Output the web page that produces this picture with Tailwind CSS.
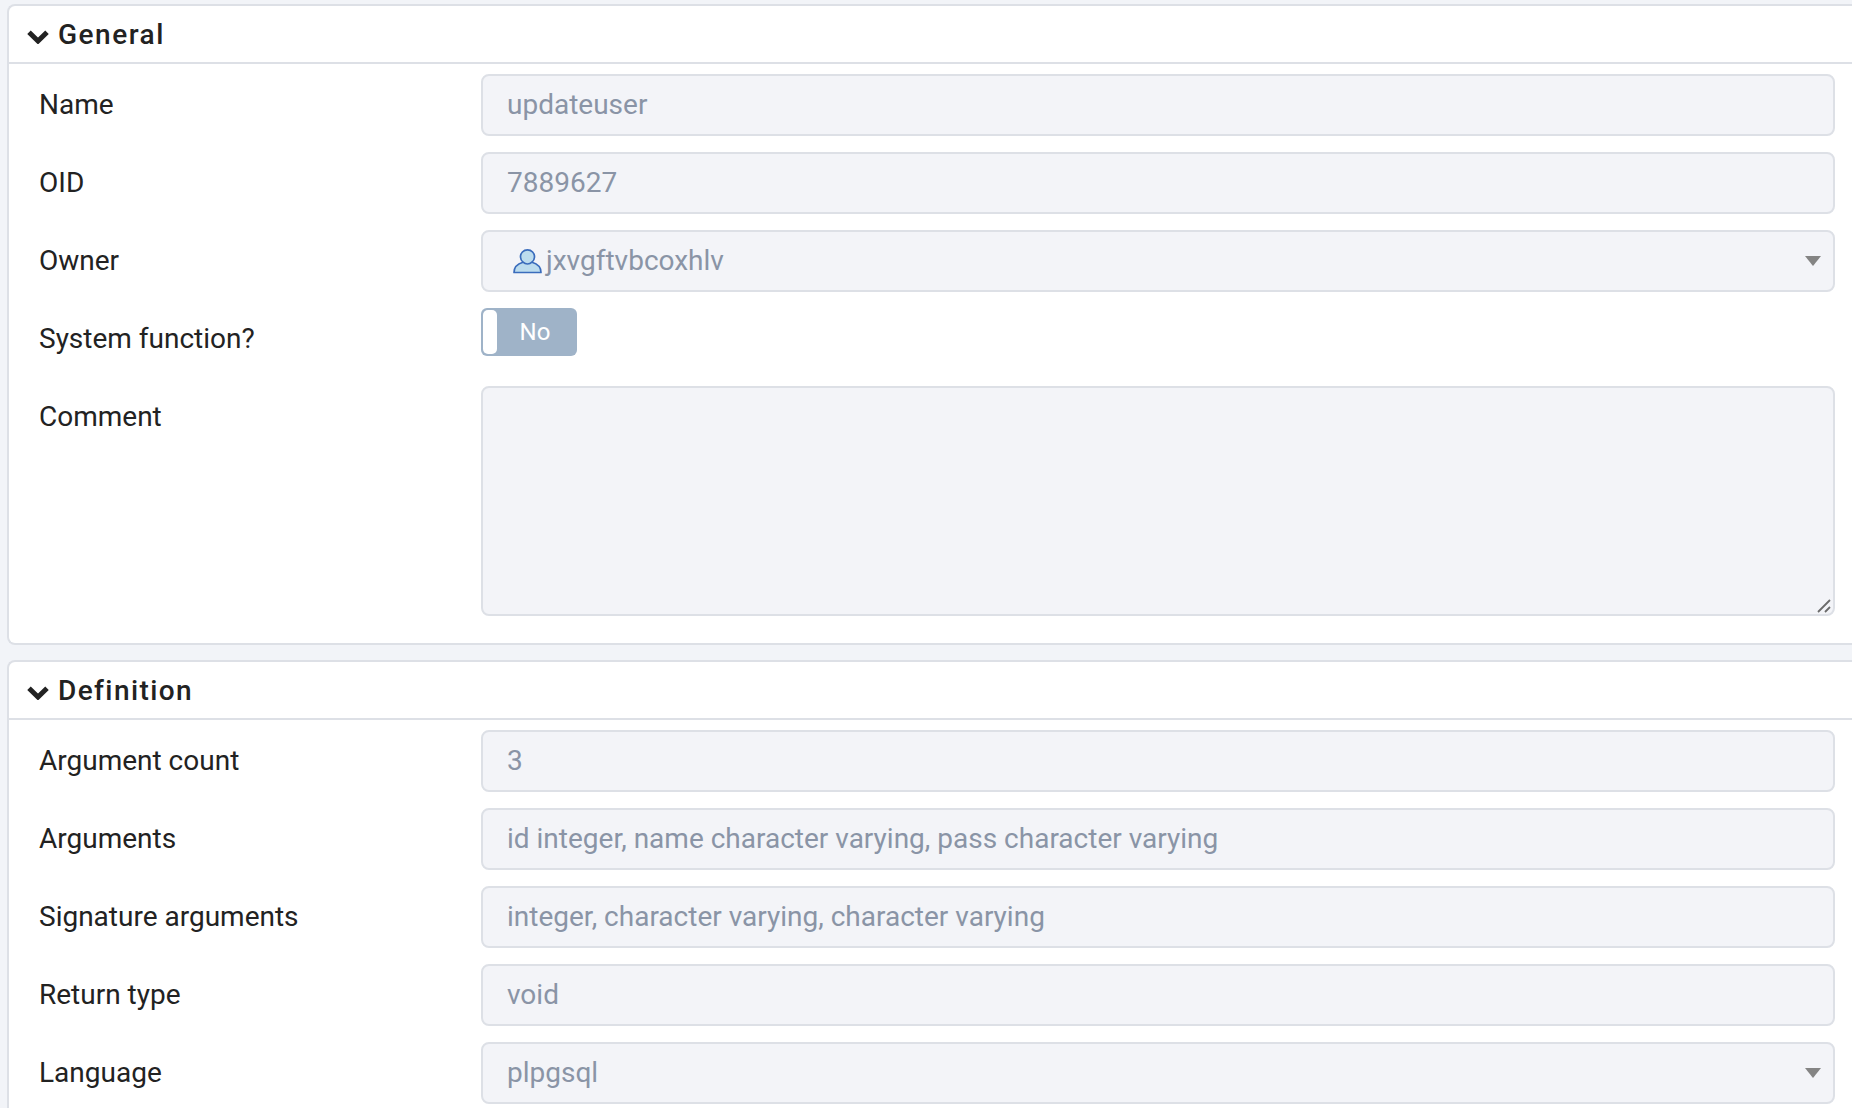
<!DOCTYPE html>
<html>
<head>
  <title>Function properties</title>
  <script src="https://cdn.jsdelivr.net/npm/@tailwindcss/browser@4"></script>
</head>
<body class="bg-[#f2f4f8] font-['Roboto',sans-serif] text-[28px] text-[#222222] overflow-hidden h-[1108px]">
  <div class="pt-[4px] pl-[7px]">

    <!-- General -->
    <section class="bg-white border-2 border-r-0 border-[#dde0e6] rounded-l-[8px] h-[641px]">
      <div class="h-[58px] flex items-center pl-[18px] border-b-2 border-[#dde0e6]">
        <svg class="w-[22px] h-[15px] mt-[5px] mr-[9px]" viewBox="0 0 22 15"><path d="M2 3.2 L11 12 L20 3.2" fill="none" stroke="#222222" stroke-width="5"/></svg>
        <span class="font-medium tracking-[1.5px] mt-[1px]">General</span>
      </div>
      <div class="pt-[10px] pl-[30px] pr-[17px] flex flex-col gap-[16px]">
        <div class="flex h-[62px]">
          <label class="w-[442px] leading-[62px]">Name</label>
          <input readonly value="updateuser" class="flex-1 h-[62px] px-[24px] pb-[2px] bg-[#f3f4f8] border-2 border-[#dde0e6] rounded-[8px] text-[#8a94a6] outline-none">
        </div>
        <div class="flex h-[62px]">
          <label class="w-[442px] leading-[62px]">OID</label>
          <input readonly value="7889627" class="flex-1 h-[62px] px-[24px] pb-[2px] bg-[#f3f4f8] border-2 border-[#dde0e6] rounded-[8px] text-[#8a94a6] outline-none">
        </div>
        <div class="flex h-[62px]">
          <label class="w-[442px] leading-[62px]">Owner</label>
          <div class="flex-1 h-[62px] pl-[30px] pr-[12px] bg-[#f3f4f8] border-2 border-[#dde0e6] rounded-[8px] text-[#8a94a6] flex items-center">
            <svg class="w-[29px] h-[26px] mr-[4px]" viewBox="0 0 29 26">
              <path d="M1 24.5 C1 18.5 5.5 15.5 10 14.2 A7 7 0 1 1 19 14.2 C23.5 15.5 28 18.5 28 24.5 Z" fill="#bcdcee" stroke="#3a6cbc" stroke-width="1.7" stroke-linejoin="round"/>
              <path d="M10 14.2 A7 7 0 0 0 19 14.2" fill="none" stroke="#3a6cbc" stroke-width="1.7"/>
            </svg>
            <span class="flex-1">jxvgftvbcoxhlv</span>
            <svg class="w-[16px] h-[10px]" viewBox="0 0 16 10"><path d="M0 0 H16 L8 10 Z" fill="#848484"/></svg>
          </div>
        </div>
        <div class="flex h-[62px]">
          <label class="w-[442px] leading-[62px]">System function?</label>
          <div class="w-[96px] h-[48px] rounded-[6px] bg-[#9fb3c8] p-[2px] flex items-center">
            <div class="w-[14px] h-[44px] bg-white rounded-[5px]"></div>
            <span class="flex-1 text-center text-white text-[24px] pr-[2px]">No</span>
          </div>
        </div>
        <div class="flex h-[230px]">
          <label class="w-[442px] leading-[62px]">Comment</label>
          <div class="flex-1 relative">
            <textarea readonly class="block w-full h-[230px] bg-[#f3f4f8] border-2 border-[#dde0e6] rounded-[8px] resize-none outline-none"></textarea>
            <svg class="absolute right-[4px] bottom-[3px] w-[14px] h-[14px]" viewBox="0 0 14 14"><path d="M1 13 L13 1 M8 13 L13 8" stroke="#6b6b6b" stroke-width="1.8" fill="none"/></svg>
          </div>
        </div>
      </div>
    </section>

    <!-- Definition -->
    <section class="mt-[15px] bg-white border-2 border-b-0 border-r-0 border-[#dde0e6] rounded-tl-[8px] pb-[20px]">
      <div class="h-[58px] flex items-center pl-[18px] border-b-2 border-[#dde0e6]">
        <svg class="w-[22px] h-[15px] mt-[5px] mr-[9px]" viewBox="0 0 22 15"><path d="M2 3.2 L11 12 L20 3.2" fill="none" stroke="#222222" stroke-width="5"/></svg>
        <span class="font-medium tracking-[1.4px] mt-[1px]">Definition</span>
      </div>
      <div class="pt-[10px] pl-[30px] pr-[17px] flex flex-col gap-[16px]">
        <div class="flex h-[62px]">
          <label class="w-[442px] leading-[62px]">Argument count</label>
          <input readonly value="3" class="flex-1 h-[62px] px-[24px] pb-[2px] bg-[#f3f4f8] border-2 border-[#dde0e6] rounded-[8px] text-[#8a94a6] outline-none">
        </div>
        <div class="flex h-[62px]">
          <label class="w-[442px] leading-[62px]">Arguments</label>
          <input readonly value="id integer, name character varying, pass character varying" class="flex-1 h-[62px] px-[24px] pb-[2px] bg-[#f3f4f8] border-2 border-[#dde0e6] rounded-[8px] text-[#8a94a6] outline-none">
        </div>
        <div class="flex h-[62px]">
          <label class="w-[442px] leading-[62px]">Signature arguments</label>
          <input readonly value="integer, character varying, character varying" class="flex-1 h-[62px] px-[24px] pb-[2px] bg-[#f3f4f8] border-2 border-[#dde0e6] rounded-[8px] text-[#8a94a6] outline-none">
        </div>
        <div class="flex h-[62px]">
          <label class="w-[442px] leading-[62px]">Return type</label>
          <input readonly value="void" class="flex-1 h-[62px] px-[24px] pb-[2px] bg-[#f3f4f8] border-2 border-[#dde0e6] rounded-[8px] text-[#8a94a6] outline-none">
        </div>
        <div class="flex h-[62px]">
          <label class="w-[442px] leading-[62px]">Language</label>
          <div class="flex-1 h-[62px] pl-[24px] pr-[12px] bg-[#f3f4f8] border-2 border-[#dde0e6] rounded-[8px] text-[#8a94a6] flex items-center">
            <span class="flex-1">plpgsql</span>
            <svg class="w-[16px] h-[10px]" viewBox="0 0 16 10"><path d="M0 0 H16 L8 10 Z" fill="#848484"/></svg>
          </div>
        </div>
      </div>
    </section>
  </div>
</body>
</html>
